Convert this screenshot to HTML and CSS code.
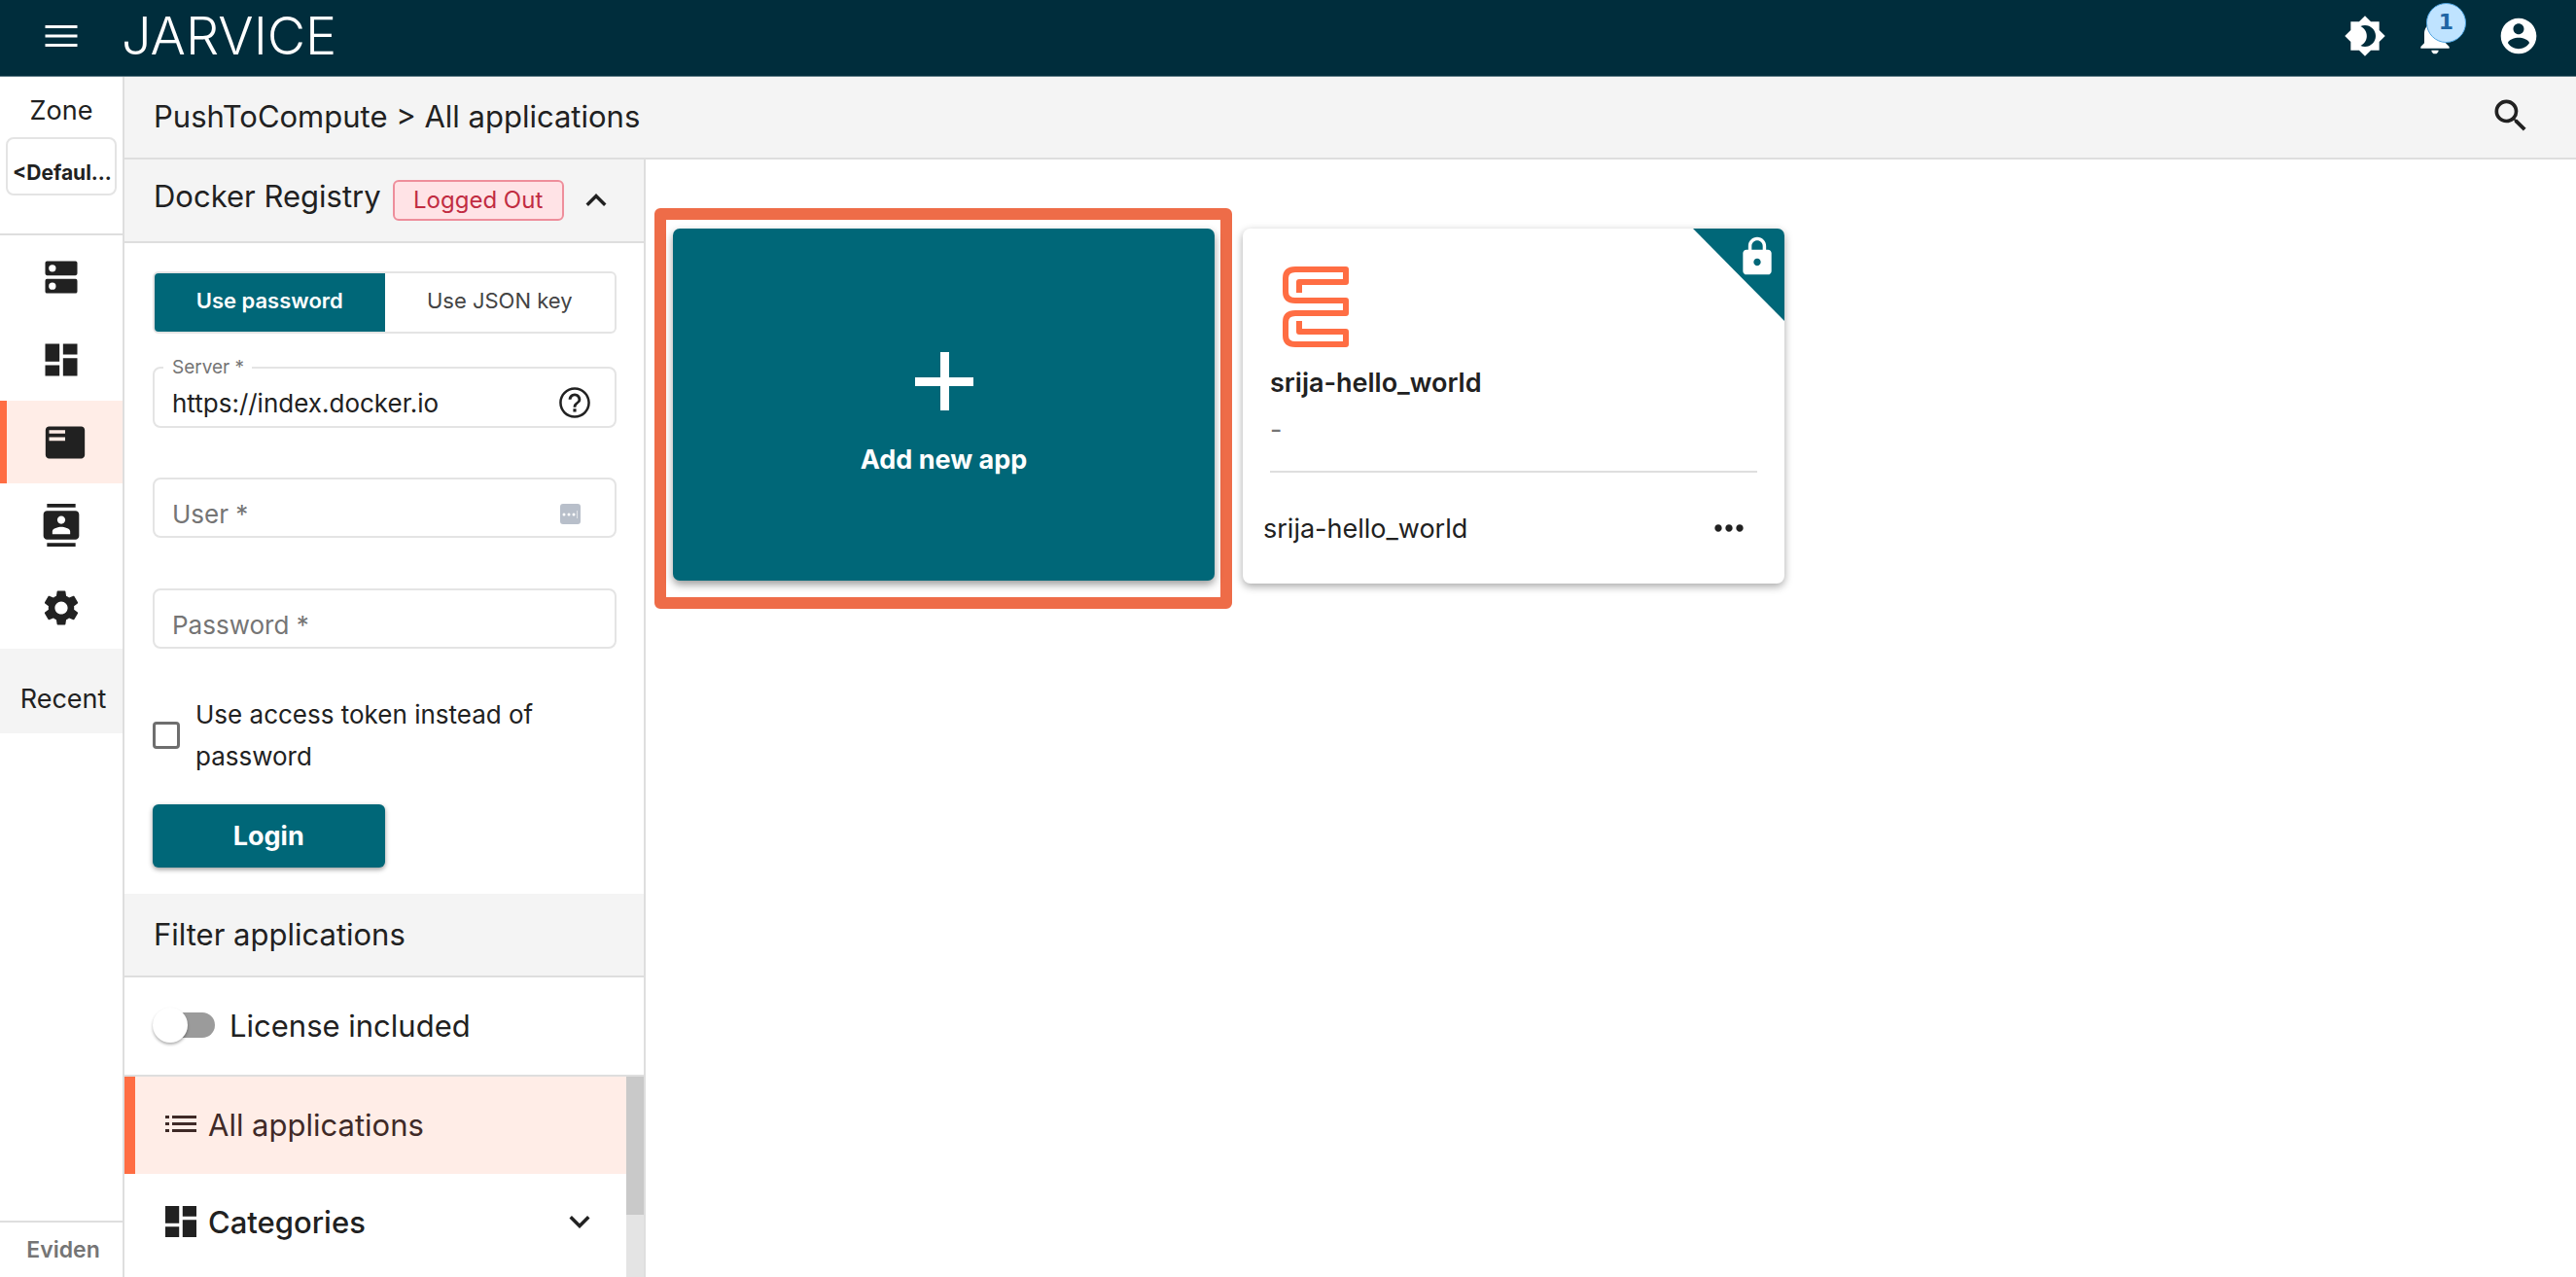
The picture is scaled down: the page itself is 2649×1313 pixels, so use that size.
FILE: index.html
```html
<!DOCTYPE html>
<html lang="en">
<head>
<meta charset="utf-8">
<meta name="viewport" content="width=device-width, initial-scale=1">
<title>JARVICE - PushToCompute</title>
<link rel="stylesheet" href="styles.css">
</head>
<body>
<svg class="sprite" aria-hidden="true">
  <symbol id="i-dashboard" viewBox="0 0 24 24"><path d="M3 13h8V3H3v10zm0 8h8v-6H3v6zm10 0h8V11h-8v10zm0-18v6h8V3h-8z"/></symbol>
  <symbol id="i-chevron" viewBox="0 0 24 24"><path d="M7.41 8.59 12 13.17l4.59-4.58L18 10l-6 6-6-6z"/></symbol>
</svg>

<header class="topbar">
  <button class="icon-btn menu-btn" aria-label="Menu"><svg class="icon" viewBox="0 0 24 24"><path d="M3 18h18v-1.600H3V18zm0-5.200h18v-1.600H3v1.600zM3 6v1.600h18V6H3z"/></svg></button>
  <h1 class="brand">JARVICE</h1>
  <div class="topbar-actions">
    <button class="icon-btn" aria-label="Theme"><svg class="icon" viewBox="0 0 24 24"><path d="M20 8.690V4h-4.690L12 .690 8.690 4H4v4.690L.690 12 4 15.310V20h4.690L12 23.310 15.310 20H20v-4.690L23.310 12 20 8.690zM12 18c-.890 0-1.740-.200-2.500-.550C11.560 16.500 13 14.420 13 12s-1.440-4.500-3.500-5.450C10.260 6.200 11.110 6 12 6c3.310 0 6 2.690 6 6s-2.690 6-6 6z"/></svg></button>
    <button class="icon-btn" aria-label="Notifications"><svg class="icon" viewBox="0 0 24 24"><path d="M12 22c1.100 0 2-.900 2-2h-4c0 1.100.890 2 2 2zm6-6v-5c0-3.070-1.640-5.640-4.500-6.320V4c0-.830-.670-1.500-1.500-1.500s-1.500.670-1.500 1.500v.680C7.630 5.360 6 7.920 6 11v5l-2 2v1h16v-1l-2-2z"/></svg><span class="badge">1</span></button>
    <button class="icon-btn account-btn" aria-label="Account"><svg class="icon" viewBox="0 0 24 24"><path d="M12 2C6.480 2 2 6.480 2 12s4.480 10 10 10 10-4.480 10-10S17.520 2 12 2zm0 3c1.660 0 3 1.340 3 3s-1.340 3-3 3-3-1.340-3-3 1.340-3 3-3zm0 14.200c-2.500 0-4.710-1.280-6-3.220.030-1.990 4-3.080 6-3.080 1.990 0 5.970 1.090 6 3.080-1.290 1.940-3.500 3.220-6 3.220z"/></svg></button>
  </div>
</header>

<div class="shell">
  <nav class="rail">
    <div class="zone">
      <label class="zone-label" for="zone">Zone</label>
      <select class="zone-select" id="zone"><option>&lt;Defaul...</option></select>
    </div>
    <a class="rail-item" href="#" aria-label="Jobs"><svg class="icon" viewBox="0 0 24 24"><path fill-rule="evenodd" d="M4 3h16a1 1 0 0 1 1 1v6a1 1 0 0 1-1 1H4a1 1 0 0 1-1-1V4a1 1 0 0 1 1-1zm3 2a2 2 0 1 0 0 4 2 2 0 0 0 0-4zM4 13h16a1 1 0 0 1 1 1v6a1 1 0 0 1-1 1H4a1 1 0 0 1-1-1v-6a1 1 0 0 1 1-1zm3 2a2 2 0 1 0 0 4 2 2 0 0 0 0-4z"/></svg></a>
    <a class="rail-item" href="#" aria-label="Dashboard"><svg class="icon"><use href="#i-dashboard"/></svg></a>
    <a class="rail-item active" href="#" aria-label="PushToCompute"><svg class="icon" viewBox="0 0 24 24"><path d="M21 3H3c-1.100 0-2 .900-2 2v14c0 1.100.900 2 2 2h18c1.100 0 2-.900 2-2V5c0-1.100-.900-2-2-2zm-9 8H3V9h9v2zm0-4H3V5h9v2z"/></svg></a>
    <a class="rail-item" href="#" aria-label="Account"><svg class="icon" viewBox="0 0 24 24"><path d="M20 0H4v2h16V0zM4 24h16v-2H4v2zM20 4H4c-1.100 0-2 .900-2 2v12c0 1.100.900 2 2 2h16c1.100 0 2-.900 2-2V6c0-1.100-.900-2-2-2zm-8 2.750c1.240 0 2.250 1.010 2.250 2.250s-1.010 2.250-2.250 2.250S9.750 10.240 9.750 9 10.760 6.750 12 6.750zM17 17H7v-1.500c0-1.670 3.330-2.500 5-2.500s5 .830 5 2.500V17z"/></svg></a>
    <a class="rail-item" href="#" aria-label="Settings"><svg class="icon" viewBox="0 0 24 24"><path d="M19.140 12.940c.040-.300.060-.610.060-.940 0-.320-.020-.640-.070-.940l2.030-1.580c.180-.140.230-.410.120-.610l-1.920-3.320c-.120-.220-.370-.290-.590-.220l-2.390.960c-.500-.380-1.030-.700-1.620-.940l-.360-2.540c-.040-.240-.240-.410-.480-.410h-3.840c-.240 0-.430.170-.470.410l-.360 2.540c-.590.240-1.130.570-1.620.940l-2.390-.960c-.220-.080-.470 0-.590.220L2.740 8.870c-.120.210-.080.470.120.610l2.030 1.580c-.050.300-.090.630-.090.940s.020.640.070.940l-2.030 1.580c-.180.140-.230.410-.120.610l1.920 3.320c.120.220.370.290.590.220l2.390-.960c.500.380 1.030.700 1.620.940l.360 2.540c.050.240.240.410.480.410h3.840c.240 0 .440-.170.470-.410l.360-2.540c.590-.240 1.130-.560 1.620-.940l2.390.960c.220.080.470 0 .590-.220l1.920-3.320c.120-.220.070-.470-.120-.610l-2.010-1.580zM12 15.600c-1.980 0-3.600-1.620-3.600-3.600s1.620-3.600 3.600-3.600 3.600 1.620 3.600 3.600-1.620 3.600-3.600 3.600z"/></svg></a>
    <div class="recent">Recent</div>
    <a class="vendor" href="#">Eviden</a>
  </nav>

  <div class="content">
    <div class="crumbs">
      <span>PushToCompute &gt; All applications</span>
      <button class="icon-btn" aria-label="Search"><svg class="icon" viewBox="0 0 24 24"><path d="M15.500 14h-.790l-.280-.270A6.470 6.470 0 0 0 16 9.500 6.500 6.500 0 1 0 9.500 16c1.610 0 3.090-.590 4.230-1.570l.270.280v.790l5 4.990L20.490 19l-4.990-5zm-6 0C7.010 14 5 11.990 5 9.500S7.010 5 9.500 5 14 7.010 14 9.500 11.990 14 9.500 14z"/></svg></button>
    </div>

    <div class="workspace">
      <aside class="panel">
        <div class="section-head registry-head">
          <h2>Docker Registry</h2>
          <span class="chip">Logged Out</span>
          <button class="icon-btn" aria-label="Collapse"><svg class="icon-sm flip"><use href="#i-chevron"/></svg></button>
        </div>

        <form class="login">
          <div class="toggle">
            <button type="button" class="toggle-on">Use password</button>
            <button type="button">Use JSON key</button>
          </div>
          <fieldset class="field server">
            <legend><label for="server">Server *</label></legend>
            <input id="server" type="text" value="https://index.docker.io">
            <svg class="icon-help" viewBox="0 0 24 24"><path d="M11 18h2v-2h-2v2zm1-16C6.480 2 2 6.480 2 12s4.480 10 10 10 10-4.480 10-10S17.520 2 12 2zm0 18.400c-4.630 0-8.400-3.770-8.400-8.400S7.370 3.600 12 3.600s8.400 3.770 8.400 8.400-3.770 8.400-8.400 8.400zM12 6c-2.210 0-4 1.790-4 4h1.800c0-1.100 1.100-2.200 2.200-2.200s2.200 1 2.200 2.200c0 2-3.100 1.750-3.100 5h1.800c0-2.250 3.100-2.500 3.100-5 0-2.210-1.790-4-4-4z"/></svg>
          </fieldset>
          <div class="field">
            <input type="text" aria-label="User" placeholder="User *">
            <svg class="icon-key" viewBox="0 0 21 21"><rect width="21" height="21" rx="3" fill="#b8bfca"/><circle cx="4" cy="11" r="1.500" fill="#fff"/><circle cx="9" cy="11" r="1.500" fill="#fff"/><circle cx="14" cy="11" r="1.500" fill="#fff"/><path d="M17 7h1v8h-1z" fill="#dfe2e7"/></svg>
          </div>
          <div class="field last">
            <input type="password" aria-label="Password" placeholder="Password *">
          </div>
          <label class="check"><input type="checkbox"><span>Use access token instead of password</span></label>
          <button type="button" class="login-btn">Login</button>
        </form>

        <div class="section-head"><h2>Filter applications</h2></div>
        <label class="license"><input type="checkbox" role="switch"><span>License included</span></label>

        <div class="filters">
          <div class="filter-list">
            <a class="filter active" href="#"><svg class="icon-list" viewBox="0 0 32 20"><path d="M0 1h4v3H0zM7 1h25v3H7zM0 8h4v3H0zM7 8h25v3H7zM0 15h4v3H0zM7 15h25v3H7z"/></svg>All applications</a>
            <a class="filter strong" href="#"><svg class="icon-grid" viewBox="3 3 18 18"><path d="M3 13h8V3H3v10zm0 8h8v-6H3v6zm10 0h8V11h-8v10zm0-18v6h8V3h-8z"/></svg>Categories<svg class="icon-sm expand"><use href="#i-chevron"/></svg></a>
          </div>
          <div class="scroll-track"><div class="scroll-thumb"></div></div>
        </div>
      </aside>

      <main class="apps">
        <div class="highlight">
          <button class="add-card">
            <svg class="plus" viewBox="0 0 60 60"><path d="M26 0h9v26h25v9H35v25h-9V35H0v-9h26z"/></svg>
            Add new app
          </button>
        </div>
        <article class="app-card">
          <div class="ribbon"><svg class="icon" viewBox="0 0 24 24"><path d="M18 8h-1V6c0-2.760-2.240-5-5-5S7 3.240 7 6v2H6c-1.100 0-2 .900-2 2v10c0 1.100.900 2 2 2h12c1.100 0 2-.900 2-2V10c0-1.100-.900-2-2-2zm-6 9c-1.100 0-2-.900-2-2s.900-2 2-2 2 .900 2 2-.900 2-2 2zm3.100-9H8.900V6c0-1.710 1.390-3.100 3.100-3.100s3.100 1.390 3.100 3.100v2z"/></svg></div>
          <div class="app-body">
            <svg class="app-logo" viewBox="0 0 68 83"><path d="M17 27V16H65V3H13Q3 3 3 12V26Q3 35 13 35H65V48H13Q3 48 3 57V71Q3 80 13 80H65V67H17V56" fill="none" stroke="#ff6d43" stroke-width="6" stroke-linejoin="round"/></svg>
            <h3>srija-hello_world</h3>
            <p>-</p>
          </div>
          <footer class="app-foot">
            <span>srija-hello_world</span>
            <button class="icon-btn" aria-label="More"><svg class="icon" viewBox="0 0 24 24"><path d="M6 10c-1.100 0-2 .900-2 2s.900 2 2 2 2-.900 2-2-.900-2-2-2zm12 0c-1.100 0-2 .900-2 2s.900 2 2 2 2-.900 2-2-.900-2-2-2zm-6 0c-1.100 0-2 .900-2 2s.900 2 2 2 2-.900 2-2-.900-2-2-2z"/></svg></button>
          </footer>
        </article>
      </main>
    </div>
  </div>
</div>
</body>
</html>
```
FILE: styles.css
```css
:root {
  --navy: #002d3c;
  --teal: #006778;
  --orange: #ff6d43;
  --peach: #ffede7;
  --grey: #f4f4f4;
  --line: #dedede;
  --ink: #212121;
}

* { box-sizing: border-box; }

body {
  margin: 0;
  height: 100vh;
  display: flex;
  flex-direction: column;
  overflow: hidden;
  background: #fff;
  color: var(--ink);
  font-family: Inter, "Open Sans", sans-serif;
  font-size: 27px;
}

h1, h2, h3, p { margin: 0; font-weight: 400; }
a { color: inherit; text-decoration: none; }
button, input, select { font: inherit; color: inherit; }
button { border: 0; padding: 0; background: none; }
svg { display: block; fill: currentColor; flex: none; }
.sprite { display: none; }
.icon { width: 44px; height: 44px; }
.icon-sm { width: 42px; height: 42px; }
.flip { transform: rotate(180deg); }
.icon-btn { position: relative; flex: none; }

/* Top bar */
.topbar {
  flex: none;
  height: 79px;
  display: flex;
  align-items: center;
  padding: 0 37px 5px 41px;
  background: var(--navy);
  border-bottom: 1px solid #5d7a84;
  color: #fff;
}
.brand { margin-left: 40px; font-size: 54px; font-weight: 300; line-height: 60px; }
.topbar-actions { margin-left: auto; display: flex; gap: 28px; }
.account-btn { margin-left: 14px; }
.badge {
  position: absolute;
  top: -12px;
  left: 13px;
  width: 41px;
  height: 41px;
  border: 1px solid #4da3e0;
  border-radius: 50%;
  background: #bfe3ff;
  color: #1f65a3;
  font: bold 22px/38px "DejaVu Sans", sans-serif;
  text-align: center;
}

.shell { flex: 1; display: flex; min-height: 0; }

/* Navigation rail */
.rail {
  flex: 0 0 128px;
  display: flex;
  flex-direction: column;
  border-right: 2px solid var(--line);
}
.zone {
  height: 163px;
  flex: none;
  display: flex;
  flex-direction: column;
  align-items: center;
  padding: 19px 6px 0;
  border-bottom: 2px solid var(--line);
}
.zone-label { line-height: 32px; margin-bottom: 11px; }
.zone-select {
  appearance: none;
  width: 100%;
  height: 60px;
  padding: 12px 0 0 5px;
  border: 2px solid #e4e4e4;
  border-radius: 8px;
  background: #fff;
  font-size: 21px;
  font-weight: 700;
}
.rail-item {
  flex: none;
  height: 85px;
  display: flex;
  align-items: center;
  justify-content: center;
  border-left: 0 solid var(--orange);
}
.rail-item.active { border-left-width: 7px; background: var(--peach); }
.recent {
  height: 87px;
  flex: none;
  padding: 20px 0 0 4px;
  background: var(--grey);
  line-height: 64px;
  text-align: center;
}
.vendor {
  margin-top: auto;
  height: 58px;
  padding-left: 4px;
  border-top: 2px solid var(--line);
  color: #757575;
  font-size: 23px;
  font-weight: 600;
  line-height: 56px;
  text-align: center;
}

/* Breadcrumbs */
.content { flex: 1; min-width: 0; display: flex; flex-direction: column; }
.crumbs {
  flex: none;
  height: 85px;
  display: flex;
  align-items: center;
  justify-content: space-between;
  padding: 0 45px 3px 30px;
  background: var(--grey);
  border-bottom: 2px solid var(--line);
  font-size: 31px;
}
.workspace { flex: 1; display: flex; min-height: 0; }

/* Side panel */
.panel {
  flex: 0 0 536px;
  display: flex;
  flex-direction: column;
  border-right: 2px solid var(--line);
  overflow: hidden;
}
.section-head {
  flex: none;
  height: 86px;
  display: flex;
  align-items: center;
  padding: 0 0 2px 30px;
  background: var(--grey);
  border-bottom: 2px solid var(--line);
}
.section-head h2 { font-size: 31px; white-space: nowrap; }
.registry-head { padding-bottom: 0; }
.registry-head h2 { margin-bottom: 10px; }
.chip {
  flex: none;
  margin: 0 12px;
  width: 176px;
  height: 42px;
  border: 2px solid #ee8e9b;
  border-radius: 6px;
  background: #ffe3e6;
  color: #c12c42;
  font-size: 24px;
  line-height: 38px;
  text-align: center;
}

.login { flex: none; height: 669px; padding: 29px 28px 0 29px; font-size: 26px; }
.toggle {
  display: flex;
  height: 64px;
  border: 2px solid #e4e4e4;
  border-radius: 6px;
  overflow: hidden;
  font-size: 22px;
}
.toggle button { flex: 1; padding-bottom: 4px; color: #444; }
.toggle .toggle-on { background: var(--teal); color: #fff; font-weight: 600; }
.field {
  height: 62px;
  min-width: 0;
  margin: 0 0 52px;
  padding: 0 35px 0 18px;
  display: flex;
  align-items: center;
  border: 2px solid #e4e4e4;
  border-radius: 8px;
}
.field.server { height: 74px; margin-top: 23px; margin-bottom: 51px; padding-right: 22px; }
.field.last { margin-bottom: 46px; }
.field legend { padding: 0 8px 0 9px; margin-left: -9px; color: #757575; font-size: 19px; line-height: 24px; }
.field input {
  flex: 1;
  min-width: 0;
  padding: 12px 0 0;
  border: 0;
  outline: 0;
  background: none;
}
.field.server input { padding: 0; }
.field input::placeholder { color: #757575; opacity: 1; }
.icon-help { width: 38px; height: 38px; }
.icon-key { width: 21px; height: 21px; margin-top: 12px; }
.check { display: flex; align-items: center; gap: 16px; line-height: 43px; }
.check input {
  appearance: none;
  flex: none;
  width: 28px;
  height: 28px;
  margin: 0;
  border: 3px solid #6e6e6e;
  border-radius: 4px;
}
.login-btn {
  display: block;
  width: 50%;
  height: 65px;
  margin-top: 28px;
  border-radius: 6px;
  background: var(--teal);
  color: #fff;
  font-size: 27px;
  font-weight: 700;
  box-shadow: 0 2px 5px rgba(0, 0, 0, .4);
}

.license {
  flex: none;
  height: 102px;
  display: flex;
  align-items: center;
  gap: 15px;
  padding: 0 0 2px 30px;
  border-bottom: 2px solid var(--line);
  font-size: 31px;
}
.license input {
  appearance: none;
  position: relative;
  width: 63px;
  height: 26px;
  margin: 0;
}
.license input::before {
  content: "";
  position: absolute;
  inset: 0 0 0 9px;
  border-radius: 13px;
  background: #9b9b9b;
}
.license input::after {
  content: "";
  position: absolute;
  top: -5px;
  left: -1px;
  width: 36px;
  height: 36px;
  border-radius: 50%;
  background: #fff;
  box-shadow: 0 2px 3px rgba(0, 0, 0, .3);
}

.filters { flex: 1; display: flex; min-height: 0; }
.filter-list { flex: 1; overflow: hidden; }
.filter {
  height: 100px;
  display: flex;
  align-items: center;
  gap: 12px;
  padding: 0 27px 2px 42px;
  font-size: 31px;
}
.filter.active { padding-left: 31px; border-left: 11px solid var(--orange); background: var(--peach); color: #3f2a27; }
.filter.strong { font-weight: 500; }
.icon-list { width: 32px; height: 20px; }
.icon-grid { width: 32px; height: 32px; }
.expand { margin-left: auto; }
.scroll-track { width: 18px; background: #e4e4e4; }
.scroll-thumb { height: 69%; background: #c9c9c9; }

/* Application cards */
.apps {
  flex: 1;
  display: flex;
  flex-wrap: wrap;
  align-content: flex-start;
  gap: 11px;
  padding: 50px 9px;
}
.highlight {
  width: 594px;
  height: 412px;
  display: flex;
  padding: 9px 6px 17px 7px;
  border: 12px solid #ee6c48;
  border-radius: 6px;
}
.add-card {
  flex: 1;
  display: flex;
  flex-direction: column;
  align-items: center;
  justify-content: center;
  gap: 34px;
  padding-top: 19px;
  border-radius: 7px;
  background: var(--teal);
  color: #fff;
  font-weight: 700;
  box-shadow: 0 4px 8px rgba(0, 0, 0, .4);
}
.plus { width: 60px; height: 60px; }
.app-card {
  position: relative;
  width: 557px;
  height: 365px;
  margin-top: 21px;
  border-radius: 8px;
  background: #fff;
  box-shadow: 0 3px 8px rgba(0, 0, 0, .35);
}
.app-body {
  height: 251px;
  margin: 0 28px;
  padding-top: 39px;
  border-bottom: 2px solid var(--line);
}
.app-logo { width: 68px; height: 83px; margin-left: 13px; }
.app-body h3 { margin-top: 21px; font-size: 27px; font-weight: 600; line-height: 32px; }
.app-body p { margin-top: 16px; line-height: 32px; color: #757575; }
.app-foot {
  height: 114px;
  display: flex;
  align-items: center;
  justify-content: space-between;
  padding: 0 35px 0 21px;
}
.ribbon {
  position: absolute;
  top: 0;
  right: 0;
  width: 94px;
  height: 95px;
  padding: 7px 0 0 44px;
  border-top-right-radius: 7px;
  background: var(--teal);
  clip-path: polygon(0 0, 100% 0, 100% 100%);
  color: #fff;
}
```
